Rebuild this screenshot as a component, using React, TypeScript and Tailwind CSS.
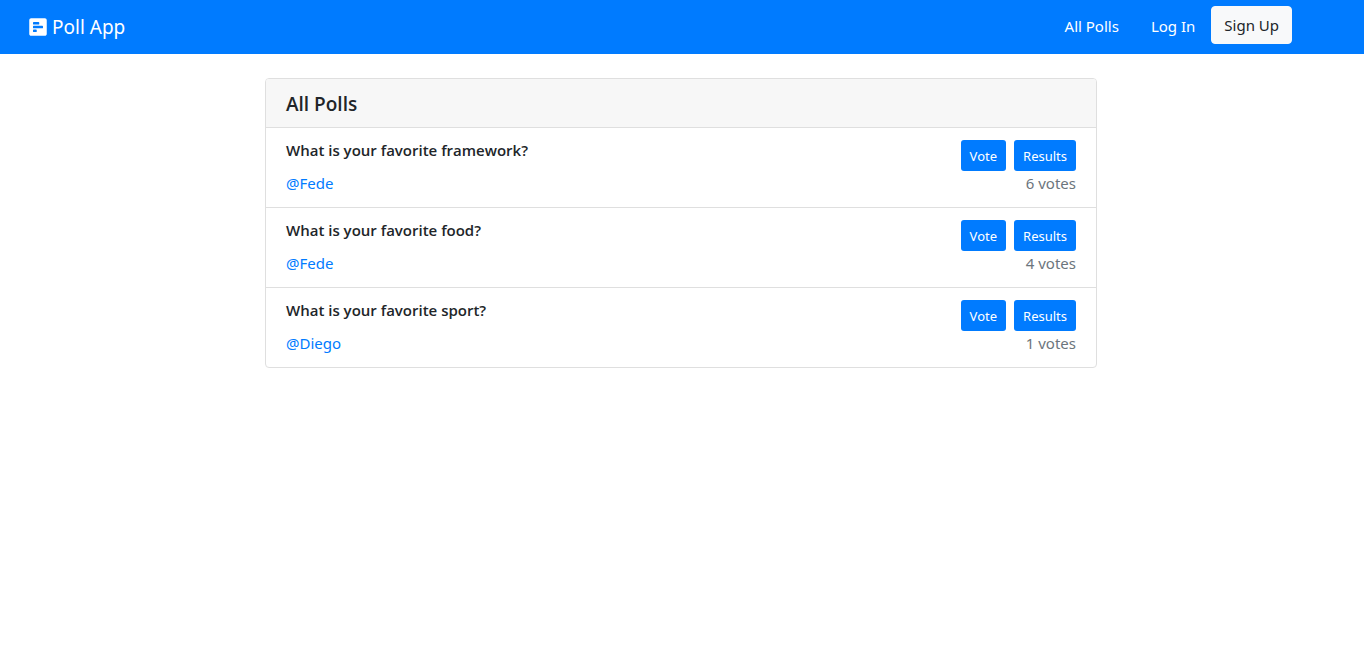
import { FaPollH } from "react-icons/fa";

type Poll = { id: number; question: string; author: string; votes: number };

const polls: Poll[] = [
  { id: 1, question: "What is your favorite framework?", author: "Fede", votes: 6 },
  { id: 2, question: "What is your favorite food?", author: "Fede", votes: 4 },
  { id: 3, question: "What is your favorite sport?", author: "Diego", votes: 1 },
];

function Navbar() {
  return (
    <nav className="flex h-[54px] items-center justify-between bg-[#007bff] pr-[72px] pl-7 text-white">
      <a href="#home" className="flex items-center gap-1 text-[19px] leading-[30px]">
        <FaPollH className="size-5" aria-hidden="true" />
        <span>Poll App</span>
      </a>
      <div className="flex items-center pb-1">
        <a href="#polls" className="px-4 pt-0.5 leading-6">
          All Polls
        </a>
        <a href="#login" className="px-4 pt-0.5 leading-6">
          Log In
        </a>
        <a
          href="#signup"
          className="rounded border border-[#f8f9fa] bg-[#f8f9fa] px-3 py-1.5 leading-6 text-[#212529]"
        >
          Sign Up
        </a>
      </div>
    </nav>
  );
}

function PollRow({ poll }: { poll: Poll }) {
  return (
    <li className="flex justify-between px-5 py-3">
      <div className="flex flex-col items-start gap-[10px]">
        <h2 className="font-['Open_Sans',sans-serif] leading-[21px] font-semibold">
          {poll.question}
        </h2>
        <a href="#author" className="leading-6 text-[#007bff]">
          @{poll.author}
        </a>
      </div>
      <div className="flex flex-col items-end">
        <div className="flex gap-2 text-[13px] leading-[21px] text-white">
          <button type="button" className="rounded-[3px] bg-[#007bff] px-[9px] pt-1.5 pb-1">
            Vote
          </button>
          <button type="button" className="rounded-[3px] bg-[#007bff] px-[9px] pt-1.5 pb-1">
            Results
          </button>
        </div>
        <span className="leading-6 text-[#6c757d]">{poll.votes} votes</span>
      </div>
    </li>
  );
}

export default function App() {
  return (
    <div className="min-h-screen bg-white font-['Noto_Sans','Open_Sans',sans-serif] text-[15px] text-[#212529]">
      <Navbar />
      <main className="pt-6 pr-[18px] pl-4">
        <section className="mx-auto max-w-[832px] rounded border border-[#dfdfdf] bg-white">
          <h1 className="rounded-t-[3px] border-b border-[#dfdfdf] bg-[#f7f7f7] px-5 pt-[13px] pb-[11px] font-['Open_Sans',sans-serif] text-[19px] leading-6 font-semibold">
            All Polls
          </h1>
          <ul className="divide-y divide-[#dfdfdf]">
            {polls.map((poll) => (
              <PollRow key={poll.id} poll={poll} />
            ))}
          </ul>
        </section>
      </main>
    </div>
  );
}
